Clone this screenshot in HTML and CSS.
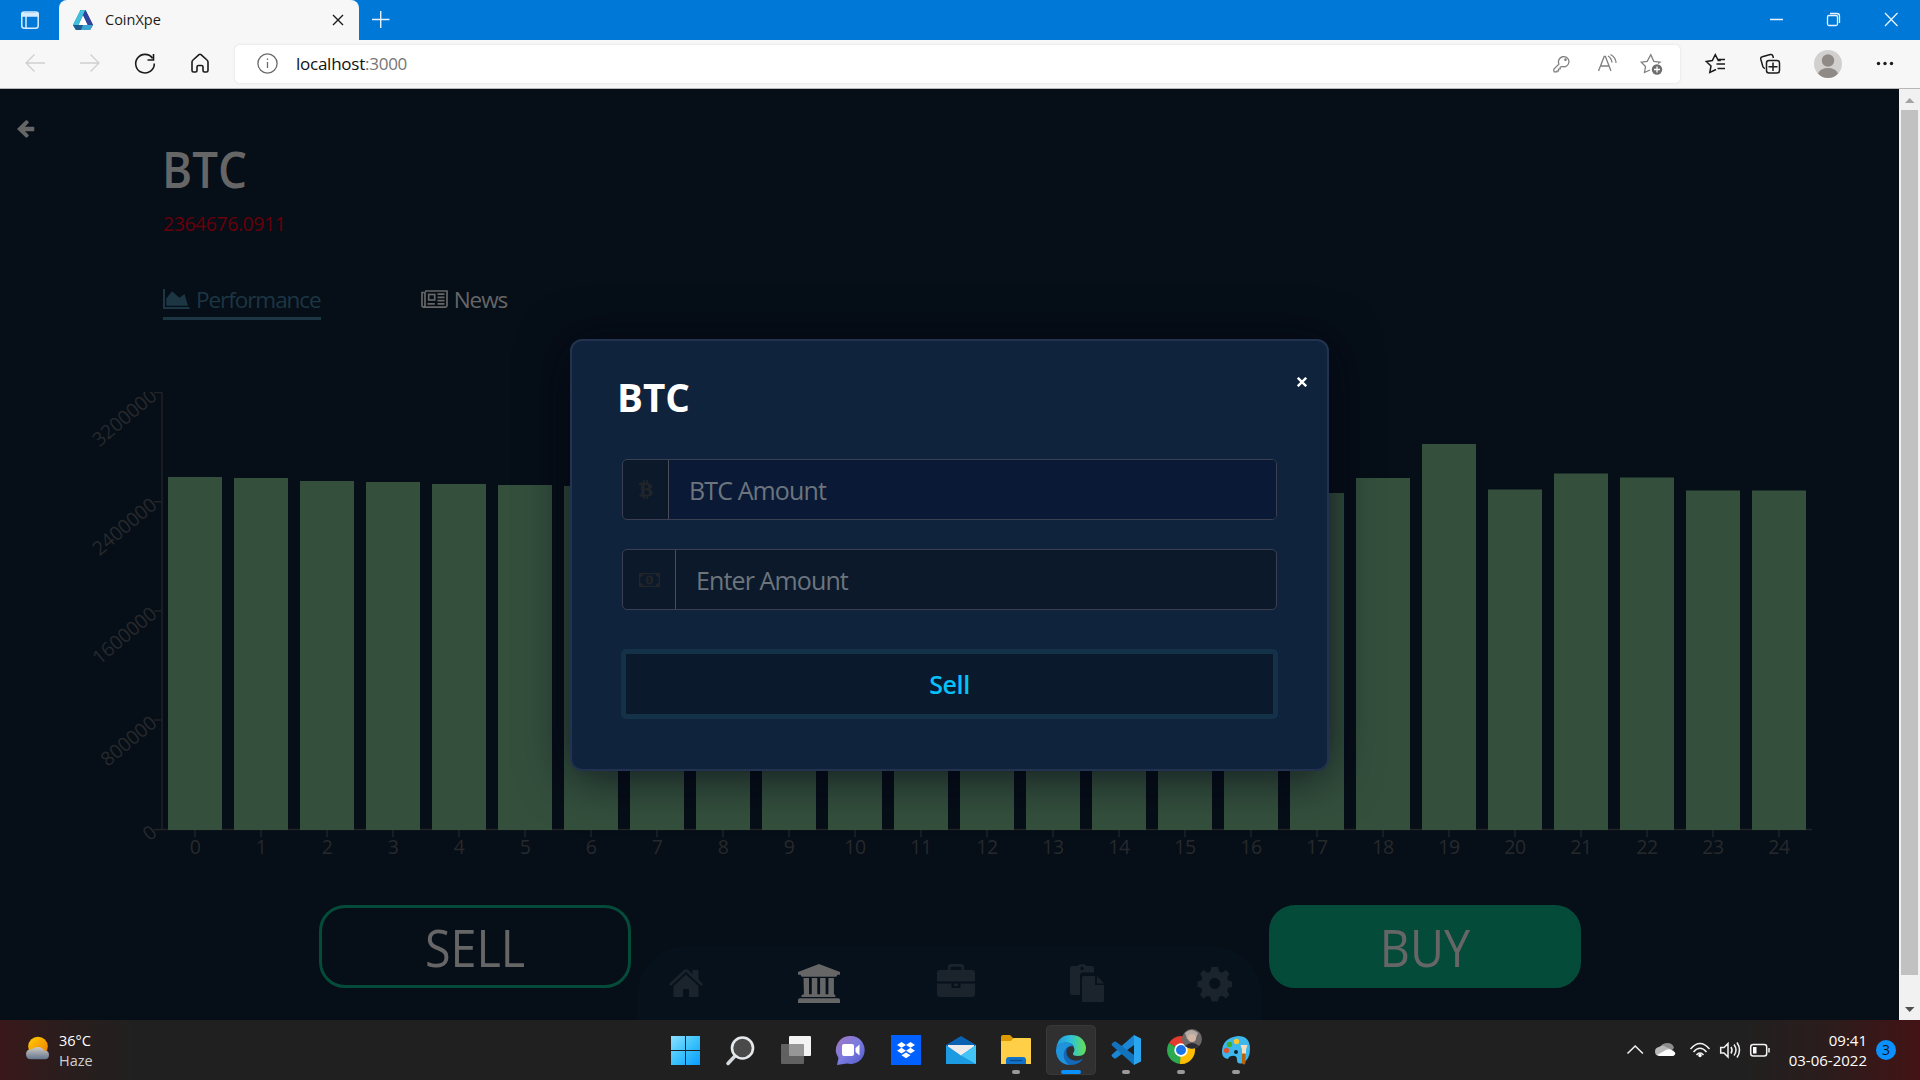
FILE: index.html
```html
<!DOCTYPE html>
<html lang="en">
<head>
<meta charset="utf-8">
<title>CoinXpe</title>
<link rel="stylesheet" href="styles.css">
</head>
<body>
<div class="screen">
  <header class="tabstrip">
    <svg class="workspace" width="59" height="40" viewBox="0 0 59 40" fill="none" stroke="#d6ecff" stroke-width="1.5"><rect x="21.8" y="12" width="16.4" height="16.200" rx="2.500"/><path d="M22 13.500h16v2.500H22z" fill="#d6ecff"/><path d="M26 16v12"/></svg>
    <div class="tab">
      <svg width="20" height="20" viewBox="0 0 20 20"><path d="M7.500 0h5L8 13.500 5.500 20H3L0 15z" fill="#2a86b4"/><path d="M7.500 0h5L20 15l-3 5-2.500-5L10 5.500 7.500 9z" fill="#252f78"/><path d="M7.500 0h5l-2.700 5.500L5 15l-5 0z" fill="#3fc0dc"/><path d="M12.500 0 20 15h-5.500L10 5.500z" fill="#2f459c"/><path d="M0 15h20l-3 5H3z" fill="#3aa5d3"/><path d="M5 15h5l-2 5H3l-3-5z" fill="#1d5c8c"/><path d="M10 5.500 14.500 15h-9z" fill="#fff"/></svg>
      <span class="tab-title">CoinXpe</span>
      <svg width="12" height="12" viewBox="0 0 12 12" stroke="#1b1b1b" stroke-width="1.400"><path d="M1 1l10 10M11 1 1 11"/></svg>
    </div>
    <svg width="44" height="40" viewBox="0 0 44 40" stroke="#e6f3ff" stroke-width="1.400"><path d="M13 19.500h17.500M21.700 11v17"/></svg>
    <svg class="window-buttons" width="171" height="40" viewBox="1749 0 171 40" fill="none" stroke="#e6f3ff" stroke-width="1.300"><path d="M1770 19.500h13M1885 13l12.500 13M1897.500 13 1885 26"/><rect x="1827.500" y="15.500" width="10" height="10" rx="1.500"/><path d="M1830 13.500h7q2.500 0 2.500 2.500v7"/></svg>
  </header>
  <div class="toolbar">
    <svg width="227" height="48" viewBox="8 40 227 48" fill="none" stroke="#1b1b1b" stroke-width="1.600"><path d="M45 63H26M34.500 54.500 26 63l8.500 8.500M80 63h19M90.500 54.500 99 63l-8.500 8.500" stroke="#cfcfcf" stroke-width="1.300"/><path d="M152.500 58.200A9.300 9.300 0 1 0 154.300 63.500M153.500 54v6h-6"/><path d="M192 62q0-1.200 1-2l6-5.400q1-.8 2 0l6 5.400q1 .8 1 2v8.500q0 1.500-1.500 1.500h-2q-1.500 0-1.500-1.500V67q0-1.500-1.500-1.500h-3q-1.500 0-1.500 1.500v3.500q0 1.500-1.500 1.500h-2q-1.500 0-1.500-1.500z"/></svg>
    <div class="address">
      <svg width="22" height="22" viewBox="0 0 22 22" fill="none" stroke="#6a6a6a" stroke-width="1.300"><circle cx="11.500" cy="10.500" r="9.600"/><path d="M11.500 9v6M11.500 5.500v1.600"/></svg>
      <span class="url">localhost<span class="port">:3000</span></span>
      <svg class="address-actions" width="140" height="38" viewBox="1540 45 140 38" fill="none" stroke="#808080" stroke-width="1.300"><path d="M1569 61.500a5.300 5.300 0 0 1-6.800 5l-2 .7v1.600l-1.700.3v1.700l-1.700.2v.9h-2.600q-.8-1.500-.3-2.800l5-5a5.300 5.300 0 1 1 10.100-2.600z"/><circle cx="1565.500" cy="59.700" r=".7" fill="#808080"/><path d="M1598.500 71l5.700-14.500h1.200L1611 71M1600.500 66h8.500M1608 56q3.500 2 4 6.500M1610.500 54.500q5.500 3 5.500 8.500"/><path d="M1650 70l-5.500 2.500 1-6-4.200-4.300 5.900-.9 3.600-6.500 3 6.500 6.200.9-2 1.300"/><circle cx="1657" cy="69.500" r="5.200" fill="#6e6e6e" stroke="none"/><path d="M1654 69.500h6M1657 66.500v6" stroke="#fff"/></svg>
    </div>
    <svg width="240" height="48" viewBox="1680 40 240 48" fill="none" stroke="#1b1b1b" stroke-width="1.500"><path d="M1716 69.500l-6.200 3 1.200-6.500-4.700-4.500 6-1 3-5.800 3 5.800h2.500M1718 59.500h7M1716.500 64h8.500M1717.500 68.500h7.500"/><path d="M1765 68.500q-2-.2-2.200-2.200l-2-7q-.5-2 1.500-2.500l8-2.200q2-.5 2.600 1.400l.5 2"/><rect x="1766.500" y="60.500" width="13" height="12.500" rx="2.500"/><path d="M1768.500 66.700h9M1773 62.500v8.500"/><circle cx="1828" cy="64" r="14" fill="#d2d0ce" stroke="none"/><circle cx="1828" cy="60.500" r="6.200" fill="#8f8a86" stroke="none"/><path d="M1818 73.500q2.500-5.500 10-5.500t10 5.500q-4 4.500-10 4.500t-10-4.500z" fill="#8f8a86" stroke="none"/><g fill="#1b1b1b" stroke="none"><circle cx="1878.500" cy="63.500" r="1.700"/><circle cx="1885" cy="63.500" r="1.700"/><circle cx="1891.500" cy="63.500" r="1.700"/></g></svg>
  </div>

  <div class="viewport">
    <main class="page">
      <div class="back-row"><svg width="18" height="18" viewBox="0 0 18 18" fill="#666"><path d="M0 9 8.600.6q.8-.8 1.700 0l1 1q.8.900 0 1.700L8 6.700h8.300q1 0 1 1v2.500q0 1-1 1H8l3.300 3.400q.8.900 0 1.700l-1 1q-.9.800-1.700 0z"/></svg></div>
      <h1 class="coin">BTC</h1>
      <p class="price">2364676.0911</p>
      <nav class="tabs">
        <a class="tab-link active"><svg width="27" height="20" viewBox="0 0 27 20"><path d="M0 0h2v18h24.500v2H0zM3.300 16.800V9.500L9 2.300l7.500 6.500L21.500 5l3.500 11.800z" fill="#1c3644"/></svg><span>Performance</span></a>
        <a class="tab-link"><svg width="27" height="18" viewBox="0 0 27 18" fill="none" stroke="#666" stroke-width="1.700"><path d="M4 1h22v14.500q0 1.600-1.600 1.600H2.600Q1 17.100 1 15.500V2.500h3v12.500q0 2-1.500 2"/><rect x="7.700" y="4.500" width="6" height="5.500"/><path d="M16.500 4.200h7M16.500 7.400h7M16.500 10.600h7M6.500 13.800h7.300M16.500 13.800h7"/></svg><span>News</span></a>
      </nav>
      <svg class="chart" width="1740" height="468" viewBox="80 392 1740 468">
        <g class="axis"><path d="M162 392v438M154 829.500h1658M154 392.500h8M154 501.700h8M154 610.900h8M154 720.100h8"/><path d="M195 830v7M261 830v7M327 830v7M393 830v7M459 830v7M525 830v7M591 830v7M657 830v7M723 830v7M789 830v7M855 830v7M921 830v7M987 830v7M1053 830v7M1119 830v7M1185 830v7M1251 830v7M1317 830v7M1383 830v7M1449 830v7M1515 830v7M1581 830v7M1647 830v7M1713 830v7M1779 830v7"/></g>
        <g class="bars">
          <rect x="168" y="477" width="54" height="353"/><rect x="234" y="478" width="54" height="352"/><rect x="300" y="481" width="54" height="349"/><rect x="366" y="482" width="54" height="348"/><rect x="432" y="484" width="54" height="346"/><rect x="498" y="485" width="54" height="345"/><rect x="564" y="486" width="54" height="344"/><rect x="630" y="487" width="54" height="343"/><rect x="696" y="488" width="54" height="342"/><rect x="762" y="488" width="54" height="342"/><rect x="828" y="489" width="54" height="341"/><rect x="894" y="490" width="54" height="340"/><rect x="960" y="490" width="54" height="340"/><rect x="1026" y="491" width="54" height="339"/><rect x="1092" y="491" width="54" height="339"/><rect x="1158" y="492" width="54" height="338"/><rect x="1224" y="492" width="54" height="338"/><rect x="1290" y="493" width="54" height="337"/><rect x="1356" y="478" width="54" height="352"/><rect x="1422" y="444" width="54" height="386"/><rect x="1488" y="489.500" width="54" height="340.500"/><rect x="1554" y="473.500" width="54" height="356.500"/><rect x="1620" y="477.500" width="54" height="352.500"/><rect x="1686" y="490.500" width="54" height="339.500"/><rect x="1752" y="490.500" width="54" height="339.500"/>
        </g>
        <g class="xlabels"><text x="195" y="854">0</text><text x="261" y="854">1</text><text x="327" y="854">2</text><text x="393" y="854">3</text><text x="459" y="854">4</text><text x="525" y="854">5</text><text x="591" y="854">6</text><text x="657" y="854">7</text><text x="723" y="854">8</text><text x="789" y="854">9</text><text x="855" y="854">10</text><text x="921" y="854">11</text><text x="987" y="854">12</text><text x="1053" y="854">13</text><text x="1119" y="854">14</text><text x="1185" y="854">15</text><text x="1251" y="854">16</text><text x="1317" y="854">17</text><text x="1383" y="854">18</text><text x="1449" y="854">19</text><text x="1515" y="854">20</text><text x="1581" y="854">21</text><text x="1647" y="854">22</text><text x="1713" y="854">23</text><text x="1779" y="854">24</text></g>
        <g class="ylabels"><text transform="translate(153 392) rotate(-40)" y="8">3200000</text><text transform="translate(153 501) rotate(-40)" y="8">2400000</text><text transform="translate(153 610) rotate(-40)" y="8">1600000</text><text transform="translate(153 719) rotate(-40)" y="8">800000</text><text transform="translate(153 828.500) rotate(-40)" y="8">0</text></g>
      </svg>
      <div class="actions">
        <button class="trade sell"><span>SELL</span></button>
        <button class="trade buy"><span>BUY</span></button>
      </div>
    </main>

    <nav class="dock">
      <svg width="625" height="74" viewBox="637 946 625 74" fill="#1b232c"><path d="M669 984l15-14q2-1.500 4 0l4.500 4.300V970h6v9.500l4.500 4.500-1.700 2-15.300-14.300L670.700 986zM686 974.500l12.500 11.600V997H689v-8h-6v8h-9.500v-10.900z"/><g fill="#666"><path d="M819 964l21 8v2.700h-2.700q0 2-1.500 2h-33.600q-1.500 0-1.500-2H798V972zM803.500 978h5.500v16.300h2.800V978h5.500v16.300h2.800V978h5.500v16.300h2.800V978h5.500v16.300q1.500 0 1.500 1.700v1h-34v-1q0-1.700 2.600-1.700zM800 998.300h38q2 0 2 1.700v3h-42v-3q0-1.700 2-1.700z"/></g><path d="M948 970v-3.500q0-2.500 2.500-2.500h11q2.500 0 2.500 2.500v3.500h8q3 0 3 3v8.500h-38V973q0-3 3-3zm2.500 0h11v-3.300h-11zM937 983.500h14.500v4.500h9v-4.500H975v10.500q0 3-3 3h-32q-3 0-3-3zM954 983.500h4v2.500h-4z" fill-rule="evenodd"/><path d="M1070 968q0-2 2-2h5.500q1-2 4.500-2t4.500 2h5.500q2 0 2 2v4.500h-11q-3 0-3 3V995h-8q-2 0-2-2zM1082 966.800a1.700 1.700 0 1 0 .1 0zM1082 977.500q0-1.500 1.500-1.500H1095v9h9v15.500q0 1.500-1.500 1.500h-19q-1.500 0-1.500-1.500zM1097 976l7 7.500h-7z" fill-rule="evenodd"/><path d="M1211.500 967h6.500l1 4.500 3 1.300 4-2.800 3.500 3.800-2.300 4 1 2.800 3.800.9v5.500l-3.800 1-1 2.800 2.300 4-3.500 3.800-4-2.800-3 1.300-1 4.400h-6.500l-1-4.400-3-1.300-4 2.800-3.500-3.800 2.300-4-1-2.800-3.800-1v-5.500l3.800-.9 1-2.800-2.300-4 3.500-3.800 4 2.800 3-1.300zM1214.700 978a5.500 5.500 0 1 0 .1 0z" fill-rule="evenodd"/></svg>
    </nav>

    <section class="modal">
      <h2 class="modal-title">BTC</h2>
      <svg class="modal-close" width="10" height="10" viewBox="0 0 10 10" stroke="#fff" stroke-width="2.400"><path d="M.8.8l8.400 8.400M9.200.8.8 9.200"/></svg>
      <div class="field coin-field">
        <div class="addon"><svg width="14" height="19" viewBox="0 0 14 19"><path d="M0 2.800h4V0h1.700v2.800h1.500V0h1.700v2.900q4.200.5 4.200 3.500 0 2-2 2.800 2.700.8 2.700 3.500 0 3.600-4.900 4V19H7.200v-2.300H5.700V19H4v-2.300H0l.4-2h1.800V4.800H0zm5.500 2v3.600q4 .2 4-1.800t-4-1.800zm0 5.500v4.400q4.600.2 4.600-2.200t-4.600-2.200z" fill="#212529" fill-rule="evenodd"/></svg></div>
        <div class="entry">BTC Amount</div>
      </div>
      <div class="field cash-field">
        <div class="addon"><svg width="21" height="14" viewBox="0 0 21 14"><path d="M0 0h21v14H0zm4 1.300Q4 4 1.300 4v6Q4 10 4 12.700h13Q17 10 19.700 10V4Q17 4 17 1.300zM10.500 2.500q3.700 0 3.700 4.500t-3.700 4.500T6.800 7t3.700-4.500zM9.800 4.200 8.300 5.300l.6.800.8-.5v3H8.500v1h4v-1h-1.200V4.200z" fill="#212529" fill-rule="evenodd"/></svg></div>
        <div class="entry">Enter Amount</div>
      </div>
      <button class="confirm">Sell</button>
    </section>
    <div class="scrollbar">
      <svg width="21" height="21" viewBox="0 0 21 21" fill="#a3a3a3"><path d="M6 14h9.500L10.700 9z"/></svg>
      <div class="thumb"></div>
      <svg width="21" height="21" viewBox="0 0 21 21" fill="#505050"><path d="M6 8h9.500l-4.800 5z"/></svg>
    </div>
  </div>

  <footer class="taskbar">
    <div class="weather">
      <svg width="24" height="24" viewBox="0 0 24 24"><defs><linearGradient id="sun" x2="1" y2="1"><stop offset="0" stop-color="#ffd000"/><stop offset="1" stop-color="#f07800"/></linearGradient><linearGradient id="haze" x2="0" y2="1"><stop offset="0" stop-color="#cfcac4"/><stop offset="1" stop-color="#64778f"/></linearGradient></defs><circle cx="12" cy="10.500" r="9.800" fill="url(#sun)"/><path d="M5 23.200q-5 0-5-5t5.300-4.700Q7.500 10.800 12 11t6 3.200q5 .3 5 4.800t-5 4.200z" fill="url(#haze)"/></svg>
      <div class="weather-text"><span>36°C</span><span class="condition">Haze</span></div>
    </div>
    <div class="apps">
      <svg width="55" height="60" viewBox="0 0 55 60"><defs><linearGradient id="win" x2="1" y2="1"><stop offset="0" stop-color="#8be0ff"/><stop offset=".5" stop-color="#3cc3fb"/><stop offset="1" stop-color="#0a9cff"/></linearGradient></defs><path d="M13 16h14v14H13zM28 16h14v14H28zM13 31h14v14H13zM28 31h14v14H28z" fill="url(#win)"/></svg>
      <svg width="55" height="60" viewBox="0 0 55 60" fill="#4a4a4a"><path d="M22 36l-7 7.500" stroke="#d5dade" stroke-width="3.500" stroke-linecap="round"/><circle cx="29.500" cy="28" r="10.500" stroke="#e6e9eb" stroke-width="2.600"/></svg>
      <svg width="55" height="60" viewBox="0 0 55 60"><rect x="21" y="16" width="22" height="20" rx="1" fill="#f3f3f3"/><rect x="13" y="24" width="23" height="20" rx="1" fill="#777" opacity=".75"/></svg>
      <svg width="55" height="60" viewBox="0 0 55 60"><defs><linearGradient id="chat" x1="0" x2="1" y2="1"><stop offset="0" stop-color="#a375c0"/><stop offset=".5" stop-color="#7b7be0"/><stop offset="1" stop-color="#5059c9"/></linearGradient></defs><path d="M28 16a14 14 0 1 1-4 27.500l-10 1.500 1.500-7A14 14 0 0 1 28 16z" fill="url(#chat)"/><rect x="19" y="24" width="12" height="12" rx="2" fill="#fff"/><path d="M32.500 28l4-3.500v11l-4-3.500z" fill="#fff"/></svg>
      <svg width="55" height="60" viewBox="0 0 55 60"><path d="M13 15h30v30H13z" fill="#0061fe"/><path d="M23.500 22l4.500 2.900-4.500 2.900-4.500-2.900zM32.500 22l4.500 2.900-4.500 2.900-4.500-2.900zM23.500 27.800l4.500 2.900-4.500 2.900-4.500-2.900zM32.500 27.800l4.500 2.900-4.500 2.900-4.500-2.900zM28 32.500l4.500 2.800-4.500 2.900-4.500-2.900z" fill="#fff"/></svg>
      <svg width="55" height="60" viewBox="0 0 55 60"><path d="M13 25l15-9 15 9v8H13z" fill="#0b62b0"/><path d="M15 25h26v8L28 37l-13-4z" fill="#ececec"/><path d="M13 25l15 10.500L43 25v19H13z" fill="#1d9be2"/><path d="M43 25v19L28 35.500z" fill="#44c4f5"/></svg>
      <svg width="55" height="60" viewBox="0 0 55 60"><path d="M13 17q0-2 2-2h7l3 3v6H13z" fill="#dd9a04"/><path d="M13 21h10l2.500-3H42q1 0 1 1v25H13z" fill="#ffcf48"/><path d="M18 44v-4q0-3 3-3h14q3 0 3 3v4z" fill="#1173c8"/><path d="M22 40.500h12" stroke="#0a4a8c" stroke-width="1.400"/><rect x="24" y="50" width="8" height="4" rx="2" fill="#999"/></svg>
      <svg class="current" width="55" height="60" viewBox="0 0 55 60"><defs><linearGradient id="ed" x2="1"><stop offset="0" stop-color="#2398e0"/><stop offset=".5" stop-color="#2fc3d8"/><stop offset="1" stop-color="#66e04f"/></linearGradient></defs><rect x="3.500" y="5.500" width="49" height="49" rx="4" fill="#303030" stroke="#393939"/><path d="M13.300 28Q15 15 28 15q13 0 15 12.500.3 8.500-8 8.500-5.500 0-5-2.500 2-2 1.300-5Q30 23.500 24 23.500q-7 0-10.700 4.500z" fill="url(#ed)"/><path d="M13 30q1-7 9-7.500 6.500-.3 9 4-6-1.500-7.500 3.500-1 7 5.500 10 6 2 11-1.500-3.500 6.500-12 6.500Q13.500 44.500 13 30z" fill="#1468b8"/><path d="M13 30q1-7 9-7.500 5 0 7.500 3-6.500 0-8.500 6.500-2 7 5 12.900Q13.500 43 13 30z" fill="#2093dd"/><rect x="18" y="50" width="20" height="4" rx="2" fill="#0a91ff"/></svg>
      <svg width="55" height="60" viewBox="0 0 55 60"><path d="M36 15 14 34.500q-1 1 0 2l2 1.700q1 .8 2 0L36 25z" fill="#1b86d3"/><path d="M36 45 14 25.500q-1-1 0-2l2-1.700q1-.8 2 0L36 35z" fill="#1273bd"/><path d="M36 15l7 3.500v23L36 45z" fill="#2aa5f0"/><rect x="24" y="50" width="8" height="4" rx="2" fill="#999"/></svg>
      <svg width="55" height="60" viewBox="0 0 55 60"><path d="M28 30 15.900 23A14 14 0 0 1 40.100 23z" fill="#e33b2e"/><path d="M28 30 15.900 23A14 14 0 0 0 28 44z" fill="#2da94f"/><path d="M28 30 40.100 23A14 14 0 0 1 27 44z" fill="#fdbd00"/><path d="M27.500 24H41" stroke="#e33b2e" stroke-width="2"/><circle cx="28" cy="30" r="6.700" fill="#fff"/><circle cx="28" cy="30" r="5" fill="#1a73e8"/><circle cx="39" cy="19" r="10" fill="#6d6766"/><path d="M32 13q6-6 13 0l-2 5q-4 3-9 1z" fill="#b3aaa3"/><circle cx="39" cy="18" r="4" fill="#d3b5a5"/><path d="M32 26q7-6 14 0-7 5-14 0z" fill="#2b2b33"/><rect x="24" y="50" width="8" height="4" rx="2" fill="#999"/></svg>
      <svg width="55" height="60" viewBox="0 0 55 60"><path d="M30 16q12 0 12 13 0 10-7 14-6 2-6-3t-5-4q-3 0-4 3-6-1-6-7 0-14 16-16z" fill="#3cb8ec"/><circle cx="28.500" cy="21.500" r="2.700" fill="#ffc62b"/><circle cx="21.500" cy="24.500" r="2.700" fill="#3faf2b"/><circle cx="18.500" cy="30.500" r="2.700" fill="#e2522b"/><circle cx="28" cy="32" r="2" fill="#123"/><path d="M34 33h3.500v10q-1.700 3-3.500 0z" fill="#b8620e"/><path d="M32.500 25h7l-1.500 4.500v4h-4v-4z" fill="#f2dfc0"/><rect x="24" y="50" width="8" height="4" rx="2" fill="#999"/></svg>
    </div>
    <svg class="tray" width="160" height="60" viewBox="1620 1020 160 60" fill="none" stroke="#f2f2f2" stroke-width="1.500"><path d="M1627.500 1053.500l7.700-7.500 7.700 7.500"/><g stroke="none"><path d="M1660 1049q1-6 7-6t7 5l-4 4z" fill="#8d8d8d"/><path d="M1659 1056q-4-.5-4-4.500 0-4 4-4.500 3-3 7 0l8 4q2 5-3 5z" fill="#b8b8b8"/><path d="M1657 1055l8-4.500q5-3 8 1 3 .5 2 3-1 1.500-3 1.500h-12z" fill="#fff"/></g><path d="M1690.500 1049q9.500-11 19 0M1693.500 1052q6.500-7.500 13 0M1696.500 1055q3.500-4 7 0"/><circle cx="1700" cy="1055.500" r="1.700" fill="#fff" stroke="none"/><path d="M1720.700 1047.500h3.300l4-4v13.500l-4-4h-3.300zM1731 1047q2 3.200 0 6.500M1734 1044.500q4 5.500 0 11M1737 1042.500q5 7.500 0 15"/><rect x="1750.700" y="1044.500" width="16" height="11.500" rx="2.500"/><path d="M1769 1048v4.500"/><path d="M1753 1047h3.500v6.500h-3.500z" fill="#fff" stroke="none"/></svg>
    <div class="clock"><span>09:41</span><span>03-06-2022</span></div>
    <div class="badge">3</div>
  </footer>
</div>
</body>
</html>
```
FILE: styles.css
```css
* { box-sizing: border-box; }
body { margin: 0; font-family: "Open Sans", "Noto Sans", sans-serif; background: #060e17; overflow: hidden; }
svg { display: block; flex: none; }
h1, h2, p { margin: 0; }
button { font: inherit; padding: 0; }

.screen { width: 1920px; height: 1080px; display: flex; flex-direction: column; }

.tabstrip { height: 40px; display: flex; background: #0078d7; }
.tab { width: 300px; display: flex; align-items: center; padding: 0 15px 0 14px; background: #f7f7f7; border-radius: 8px 8px 0 0; }
.tab-title { flex: 1; margin: -2px 0 0 12px; font-size: 14.5px; color: #1b1b1b; }
.window-buttons { margin-left: auto; }

.toolbar { height: 49px; display: flex; padding-left: 8px; background: #f7f7f7; border-bottom: 1px solid #b8b8b8; }
.address { width: 1445px; height: 38px; margin-top: 5px; display: flex; align-items: center; padding-left: 21px; background: #fff; border-radius: 5px; box-shadow: 0 0 3px #ddd; }
.url { margin: -2px 0 0 18px; font-size: 17px; letter-spacing: -.25px; color: #111; }
.port { color: #757575; }
.address-actions { margin-left: auto; }

.viewport { position: relative; flex: 1; display: flex; background: #060e17; overflow: hidden; }
.page { flex: 1; padding-left: 163px; }
.back-row { height: 50px; padding-top: 31px; margin-left: -146px; }
.coin { margin-left: -1px; line-height: 60px; font-size: 50px; font-weight: 600; color: #666; transform: scaleX(.915); transform-origin: left; }
.price { margin-top: 10px; line-height: 30px; font-size: 19.500px; letter-spacing: -.45px; color: #66000a; }
.tabs { display: flex; gap: 100px; margin-top: 42px; }
.tab-link { display: flex; align-items: center; gap: 6px; height: 39px; padding-bottom: 3px; font-size: 22.5px; letter-spacing: -1.05px; line-height: 36px; color: #666; }
.tab-link.active { padding-bottom: 0; border-bottom: 3px solid #1c3644; color: #1c3644; }
.tab-link span { margin-top: 1px; }
.chart { margin: 72px 0 0 -83px; }
.axis { fill: none; stroke: #212326; stroke-width: 1.500; }
.bars { fill: #34503d; }
.xlabels, .ylabels { font-size: 19.500px; fill: #26292c; }
.xlabels { text-anchor: middle; letter-spacing: -.4px; }
.ylabels { text-anchor: end; letter-spacing: -.2px; }
.actions { display: flex; justify-content: space-between; margin: 45px 318px 0 156px; }
.trade { width: 312px; height: 83px; border-radius: 26px; border: 3px solid #044b39; font-size: 51px; line-height: 79px; color: #666; background: none; }
.trade span { display: block; transform: scaleX(.915); }
.buy { background: #044b39; }

.dock { position: absolute; left: 637px; bottom: 0; width: 625px; border-radius: 50px 50px 0 0; background: #07111c; }

.modal { position: absolute; left: 570px; top: 250px; width: 759px; height: 432px; padding: 31px 50px 0; display: flex; flex-direction: column; background: #10233c; border: 2px solid #23334f; border-radius: 12px; box-shadow: 0 5px 50px rgba(4, 6, 20, .75); }
.modal-title { line-height: 50px; margin: 0 0 37px -5px; font-size: 40px; font-weight: 700; color: #fff; transform: scaleX(.965); transform-origin: left; }
.modal-close { position: absolute; right: 20px; top: 36px; }
.field { display: flex; height: 61px; border: 1px solid #3a3f51; border-radius: 5px; background: #0b192b; overflow: hidden; }
.addon { display: flex; align-items: center; justify-content: center; border-right: 1px solid #4a4c58; }
.entry { flex: 1; padding-left: 20px; font-size: 25px; letter-spacing: -.88px; line-height: 61px; color: #6c757d; }
.coin-field .addon { width: 46px; }
.coin-field .entry { background: #0a1936; }
.cash-field { margin-top: 29px; }
.cash-field .addon { width: 53px; }
.confirm { height: 70px; margin: 39px -1px 0; border: 5px solid #133147; border-radius: 5px; background: #0a192b; font-size: 25px; letter-spacing: -.4px; font-weight: 600; color: #06c2fb; }

.scrollbar { width: 21px; display: flex; flex-direction: column; background: #f1f1f1; }
.thumb { height: 865px; margin: 0 2px auto; background: #c1c1c1; }

.taskbar { height: 60px; display: flex; color: #fff; font-size: 14.500px; line-height: 20px; background: linear-gradient(90deg, #3a181a 0, #2b1d1d 60px, #202020 140px, #202020 1740px, #2c1c1c 1830px, #431315 1920px); }
.weather { width: 658px; display: flex; padding: 16px 0 0 26px; gap: 9px; }
.weather-text { display: flex; flex-direction: column; margin-top: -5px; }
.condition { color: #d0d0d0; }
.apps { display: flex; }
.tray { margin-left: 357px; }
.clock { width: 87px; padding-top: 10px; font-size: 15px; display: flex; flex-direction: column; align-items: flex-end; }
.badge { width: 20px; height: 20px; margin: 20px 0 0 9px; border-radius: 50%; background: #0a91ff; color: #111; text-align: center; font-size: 14px; }
```
